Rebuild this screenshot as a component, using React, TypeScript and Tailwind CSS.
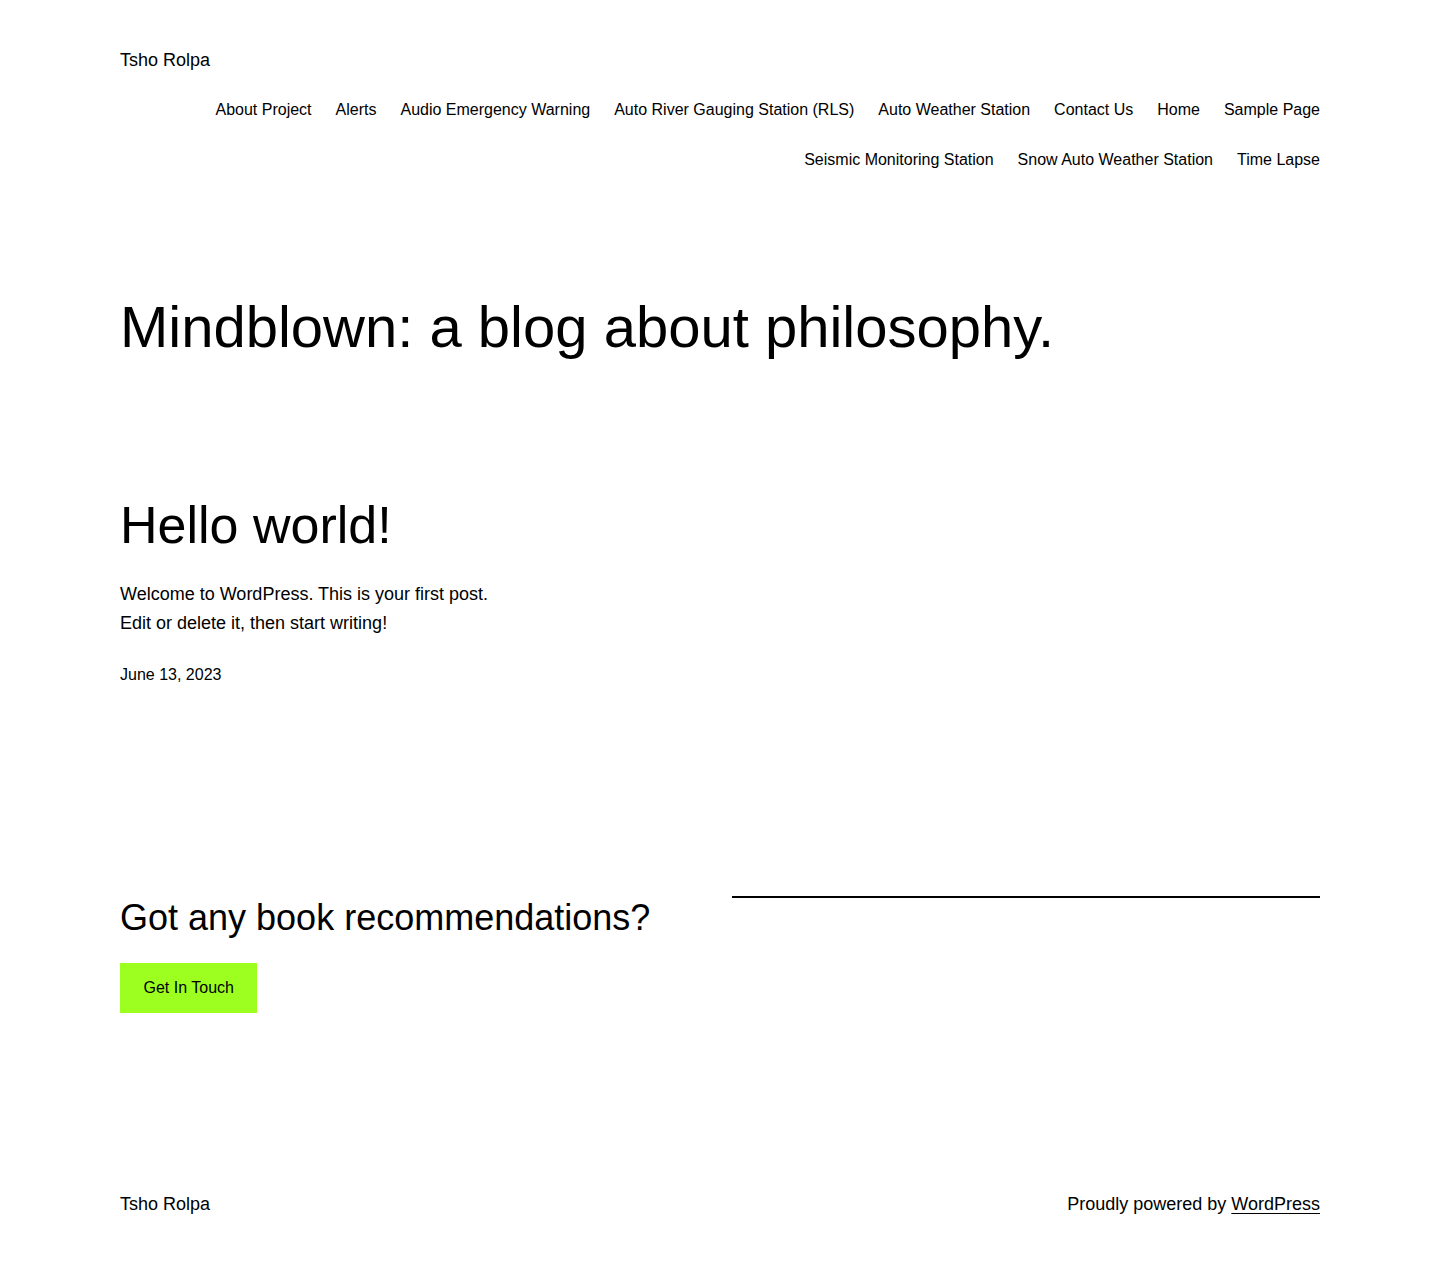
const navItems = [
  'About Project',
  'Alerts',
  'Audio Emergency Warning',
  'Auto River Gauging Station (RLS)',
  'Auto Weather Station',
  'Contact Us',
  'Home',
  'Sample Page',
  'Seismic Monitoring Station',
  'Snow Auto Weather Station',
  'Time Lapse',
]

export default function App() {
  return (
    <div className="min-h-screen bg-white text-black font-['Liberation_Sans',Arial,sans-serif]">
      <div className="px-[120px] pb-[48px]">
        {/* header */}
        <header className="pt-[46px]">
          <a href="#" className="block text-[18px] leading-[28px]">
            Tsho Rolpa
          </a>
          <nav className="mt-[24px] flex flex-wrap justify-end gap-x-6 gap-y-[26px] pl-[80px]">
            {navItems.map((item) => (
              <a key={item} href="#" className="text-[16px] leading-[24px]">
                {item}
              </a>
            ))}
          </nav>
        </header>

        <main>
          <h1 className="mt-[120px] text-[58px] leading-[69px] font-normal">
            Mindblown: a blog about philosophy.
          </h1>

          <article className="mt-[133px]">
            <h2 className="text-[52px] leading-[62px] font-normal">
              <a href="#">Hello world!</a>
            </h2>
            <p className="mt-[24px] text-[18px] leading-[29px]">
              Welcome to WordPress. This is your first post.
              <br />
              Edit or delete it, then start writing!
            </p>
            <div className="mt-[25px] text-[16px] leading-[24px]">June 13, 2023</div>
          </article>

          <section className="mt-[209px] grid grid-cols-2 gap-6">
            <div>
              <h2 className="text-[36px] leading-[43px] font-normal">
                Got any book recommendations?
              </h2>
              <a
                href="#"
                className="mt-[24px] inline-block bg-[#9dff20] px-[23.5px] py-[13px] text-[16px] leading-[24px]"
              >
                Get In Touch
              </a>
            </div>
            <div className="pt-[0px]">
              <hr className="border-0 border-t-2 border-black" />
            </div>
          </section>
        </main>

        <footer className="mt-[177px] flex items-center justify-between text-[18px] leading-[28px]">
          <a href="#">Tsho Rolpa</a>
          <p>
            Proudly powered by{' '}
            <a href="#" className="underline underline-offset-[3px]">
              WordPress
            </a>
          </p>
        </footer>
      </div>
    </div>
  )
}
